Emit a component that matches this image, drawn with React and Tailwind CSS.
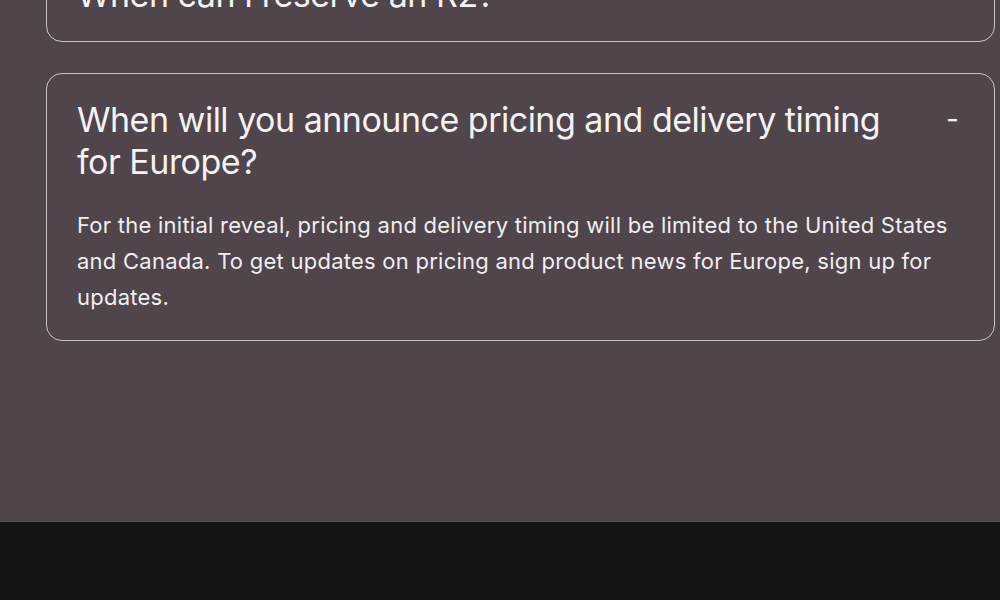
import React from 'react';

const faqs = [
  {
    question: 'When can I reserve an R2?',
    answer: null,
    open: false
  },
  {
    question: 'When will you announce pricing and delivery timing for Europe?',
    answer:
      'For the initial reveal, pricing and delivery timing will be limited to the United States and Canada. To get updates on pricing and product news for Europe, sign up for updates.',
    open: true
  }
];

const FaqItem = ({ question, answer, open }) => (
  <div className="rounded-[16px] border border-[#c9c5c7] px-[30px] pt-[25px] pb-[25px]">
    <div className="flex items-start justify-between">
      <h3 className="w-[840px] text-[34px] leading-[42px] font-normal tracking-[-0.5px] text-[#f4f2f3]">
        {question}
      </h3>
      {open && (
        <span className="mt-[-1px] mr-[5px] text-[28px] leading-[42px] text-[#f4f2f3]">-</span>
      )}
    </div>
    {open && answer && (
      <p className="mt-6 w-[885px] text-[22px] leading-[36px] tracking-[0.25px] text-[#f1eef0]">
        {answer}
      </p>
    )}
  </div>
);

export default function App() {
  return (
    <div className="w-[1000px] overflow-hidden font-['Inter',sans-serif]">
      <div className="h-[521px] overflow-hidden bg-[#4f454b]">
        <div className="mt-[-52px] ml-[46px] flex w-[949px] flex-col gap-[31px]">
          {faqs.map((faq) => (
            <FaqItem key={faq.question} {...faq} />
          ))}
        </div>
      </div>
      <div className="h-[79px] border-t border-[#5a4a52] bg-[#151515]" />
    </div>
  );
}
